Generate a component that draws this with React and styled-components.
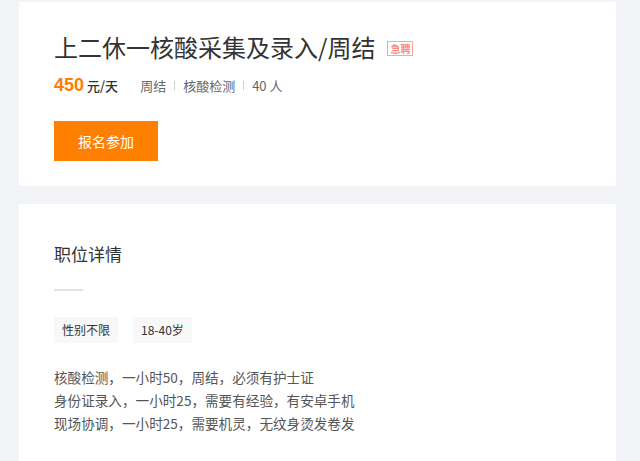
import React from 'react'
import styled, { createGlobalStyle } from 'styled-components'

const GlobalStyle = createGlobalStyle`
  html, body {
    margin: 0;
    padding: 0;
    background: #f2f3f7;
    font-family: "Noto Sans CJK SC", "Liberation Sans", sans-serif;
  }
`

const job = {
  title: '上二休一核酸采集及录入/周结',
  salary: 450,
  unit: '元/天',
  meta: ['周结', '核酸检测', '40 人'],
  tags: ['性别不限', '18-40岁'],
  details: [
    '核酸检测，一小时50，周结，必须有护士证',
    '身份证录入，一小时25，需要有经验，有安卓手机',
    '现场协调，一小时25，需要机灵，无纹身烫发卷发',
  ],
}

function App() {
  return (
    <Page>
      <GlobalStyle />
      <Card $pad="27px 35px 25px">
        <TitleRow>
          <Title>{job.title}</Title>
          <Badge>急聘</Badge>
        </TitleRow>

        <InfoRow>
          <Salary>{job.salary}</Salary>
          <Unit>{job.unit}</Unit>
          <Meta>
            {job.meta.map((m, i) => (
              <React.Fragment key={m}>
                {i > 0 && <Sep />}
                <span>{m}</span>
              </React.Fragment>
            ))}
          </Meta>
        </InfoRow>

        <ApplyButton>报名参加</ApplyButton>
      </Card>

      <Card $pad="38px 35px 40px">
        <SectionTitle>职位详情</SectionTitle>
        <Divider />
        <TagList>
          {job.tags.map(t => (
            <Tag key={t}>{t}</Tag>
          ))}
        </TagList>
        <Details>
          {job.details.map(d => (
            <p key={d}>{d}</p>
          ))}
        </Details>
      </Card>
    </Page>
  )
}

const Page = styled.div`
  display: flex;
  flex-direction: column;
  gap: 18px;
  padding: 2px 24px 0 19px;
  min-height: 100vh;
  box-sizing: border-box;
`

const Card = styled.div`
  background: #fff;
  padding: ${props => props.$pad};
`

const TitleRow = styled.div`
  display: flex;
  align-items: center;
`

const Title = styled.h1`
  margin: 0;
  font-size: 24px;
  line-height: 36px;
  font-weight: 400;
  color: #333;
`

const Badge = styled.span`
  margin-left: 12px;
  margin-top: 2px;
  border: 1px solid #f9a59a;
  color: #f7897a;
  font-size: 10px;
  line-height: 13px;
  padding: 0 2px;
  font-weight: 700;
`

const InfoRow = styled.div`
  display: flex;
  align-items: baseline;
  margin-top: 10px;
  height: 24px;
`

const Salary = styled.span`
  font-family: "Liberation Sans", sans-serif;
  font-size: 18px;
  font-weight: 700;
  color: #ff7d00;
`

const Unit = styled.span`
  margin-left: 3px;
  font-size: 13px;
  font-weight: 500;
  color: #333;
`

const Meta = styled.div`
  display: flex;
  align-items: center;
  margin-left: 22px;
  font-size: 13px;
  color: #666;
  gap: 8px;
`

const Sep = styled.i`
  width: 1px;
  height: 9px;
  background: #ccc;
`

const ApplyButton = styled.button`
  margin-top: 22px;
  width: 104px;
  height: 40px;
  border: none;
  background: #ff8000;
  color: #fff;
  font-family: inherit;
  font-size: 14px;
  cursor: pointer;
  display: block;
`

const SectionTitle = styled.h2`
  margin: 0;
  font-size: 17px;
  line-height: 24px;
  font-weight: 400;
  color: #333;
`

const Divider = styled.div`
  width: 29px;
  height: 2px;
  background: #e3e3e3;
  margin-top: 23px;
`

const TagList = styled.div`
  display: flex;
  gap: 15px;
  margin-top: 26px;
`

const Tag = styled.span`
  background: #f8f8f8;
  color: #333;
  font-size: 12px;
  height: 26px;
  line-height: 26px;
  padding: 0 8px;
`

const Details = styled.div`
  margin-top: 23px;
  font-size: 13.6px;
  line-height: 23px;
  color: #555;

  p {
    margin: 0;
  }
`

export default App
